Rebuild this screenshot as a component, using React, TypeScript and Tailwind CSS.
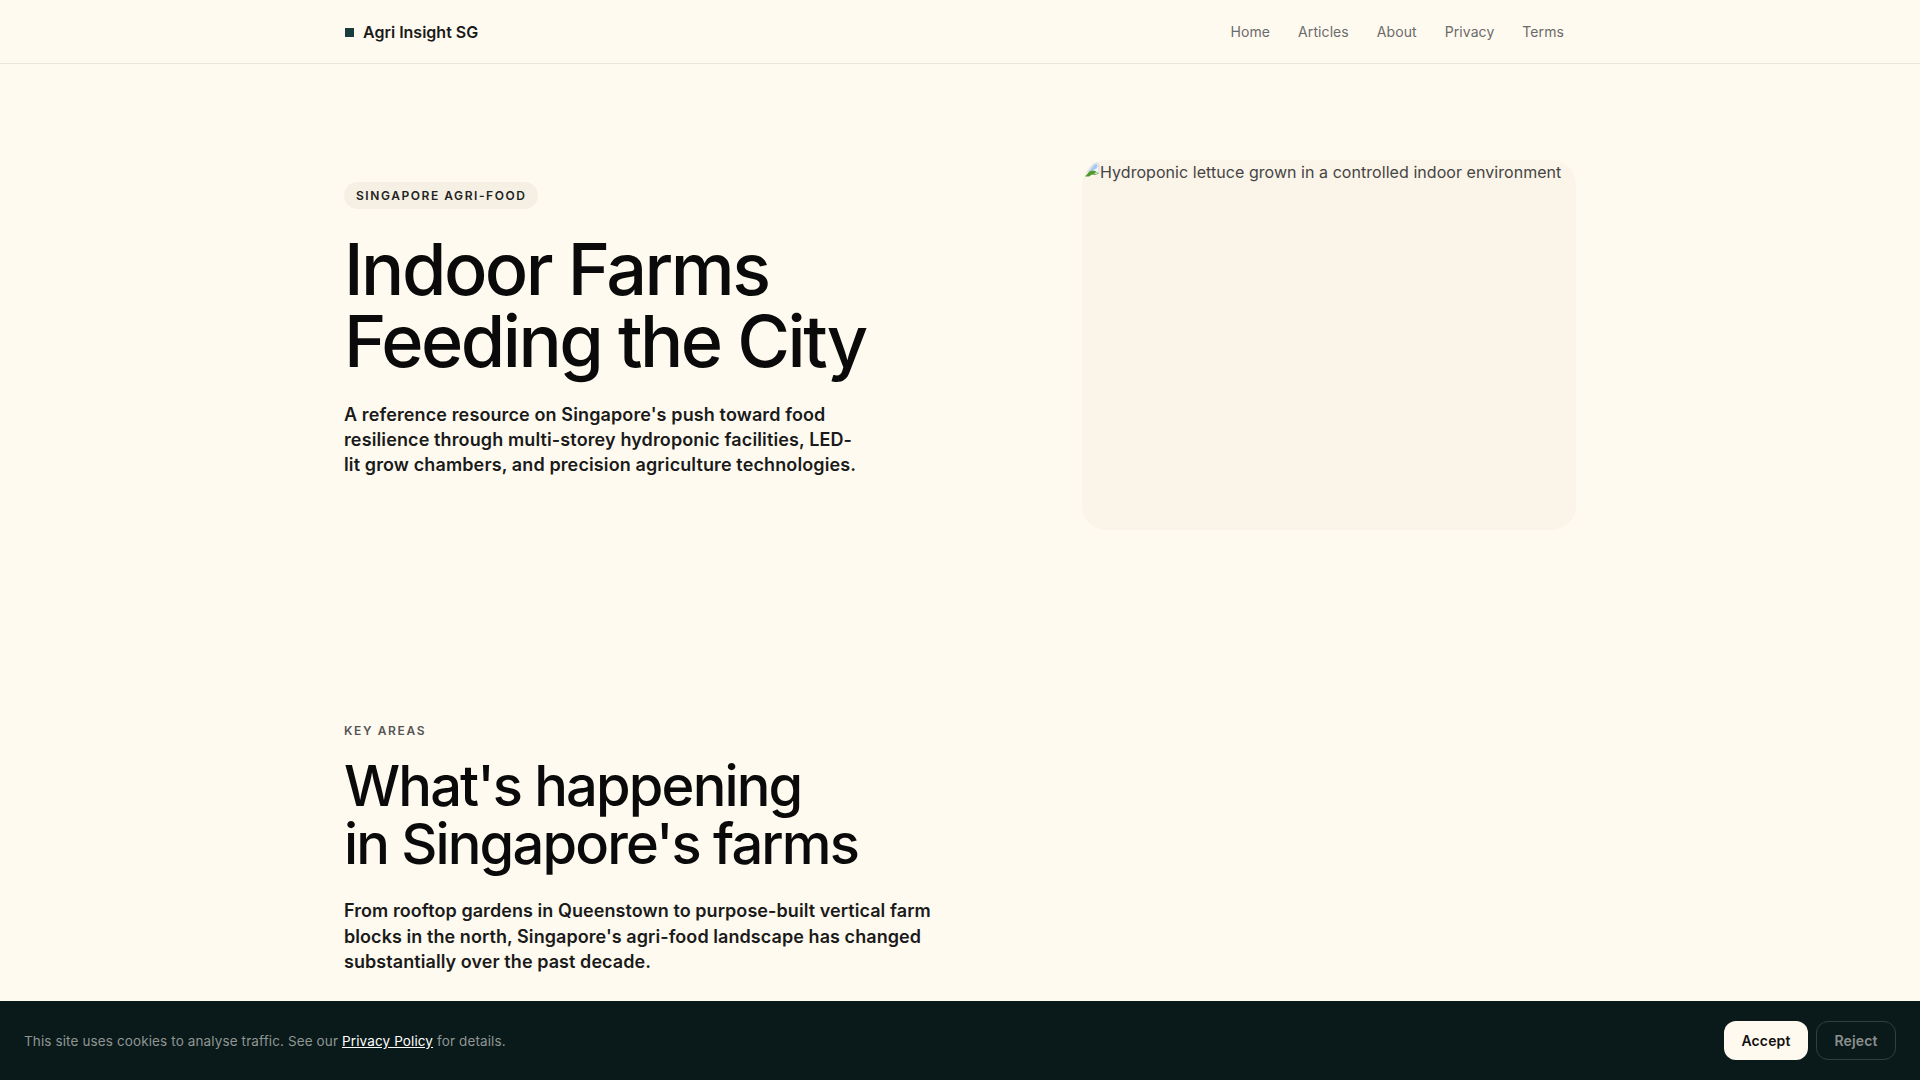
const navLinks = ["Home", "Articles", "About", "Privacy", "Terms"];

function BrokenImageIcon() {
  return (
    <svg width="16" height="16" viewBox="0 0 16 16" className="shrink-0">
      <path d="M3.5 10L10 1h3.5L15 3v8.500z" fill="#f4f6f9" stroke="#c4c8cf" strokeWidth="0.7" />
      <path d="M4.500 10L10.500 2.200h2.500l.8 1.800-1.300 2.500-3 1.500z" fill="#a9c8f0" />
      <path d="M1 14.500L5.500 9.500C8 8 10.500 8.500 12 9.500l2.500 1.500-2 2-4.500-.5-3 2z" fill="#4f9a2f" />
      <path d="M10 11l4-1-1.500 3z" fill="#d9e8cf" />
    </svg>
  );
}

export default function App() {
  return (
    <div className="h-screen overflow-hidden bg-[#fffaf0] text-[#1a1a1a] font-['Inter',sans-serif] tracking-[0.16px]">
      {/* Nav */}
      <header className="h-16 border-b border-[#e8e6df]">
        <div className="max-w-[1280px] mx-auto px-6 h-full flex items-center justify-between">
          <div className="flex items-center gap-[9px]">
            <span className="w-[9px] h-[9px] ml-px bg-[#1a3c3c] mt-[2px]" />
            <span className="text-base font-semibold tracking-normal">Agri Insight SG</span>
          </div>
          <nav className="flex items-center gap-7 pr-3 tracking-[0.08px]">
            {navLinks.map((link) => (
              <a key={link} className="text-sm text-[#6b6b6b]">
                {link}
              </a>
            ))}
          </nav>
        </div>
      </header>

      {/* Hero */}
      <section className="max-w-[1280px] mx-auto px-6 pt-24 pb-24 grid grid-cols-[1.3fr_1fr] gap-24 items-start">
        <div className="pt-[22px]">
          <span className="inline-block px-3 py-1.5 rounded-full bg-[#f5f0e3] text-xs font-semibold tracking-[0.13em] leading-[15px] text-[#222222]">
            SINGAPORE AGRI-FOOD
          </span>
          <h1 className="mt-6 text-[72px] leading-[72px] font-medium tracking-[-0.035em] text-[#0a0a0a]">
            Indoor Farms
            <br />
            Feeding the City
          </h1>
          <p className="mt-[25px] max-w-[518px] text-lg leading-[25px] font-semibold tracking-[0.12px]">
            A reference resource on Singapore's push toward food resilience through multi-storey hydroponic facilities, LED-lit grow chambers, and precision agriculture technologies.
          </p>
        </div>
        <div className="h-[370px] rounded-3xl bg-[#fbf4e9] overflow-hidden">
          <div className="flex items-start pl-[2px] pt-[2px] text-base leading-[21px] tracking-[0.05px] text-[#444444] whitespace-nowrap">
            <BrokenImageIcon />
            <span>Hydroponic lettuce grown in a controlled indoor environment</span>
          </div>
        </div>
      </section>

      {/* Key areas */}
      <section className="max-w-[1280px] mx-auto px-6 pt-[97px]">
        <div className="text-xs font-semibold tracking-[0.135em] text-[#555555]">KEY AREAS</div>
        <h2 className="mt-[18px] text-[56px] leading-[58px] font-medium tracking-[-0.033em] text-[#0a0a0a]">
          What's happening
          <br />
          in Singapore's farms
        </h2>
        <p className="mt-[25px] max-w-[600px] text-lg leading-[25.5px] font-semibold tracking-[0.067px]">
          From rooftop gardens in Queenstown to purpose-built vertical farm blocks in the north, Singapore's agri-food landscape has changed substantially over the past decade.
        </p>
      </section>

      {/* Cookie bar */}
      <div className="fixed inset-x-0 bottom-0 h-[79px] bg-[#0a1a1a] px-6 flex items-center justify-between">
        <p className="mt-px text-[13.5px] tracking-[0.12px] text-[#8f9593]">
          This site uses cookies to analyse traffic. See our{" "}
          <a className="text-white underline">Privacy Policy</a> for details.
        </p>
        <div className="flex items-center gap-2">
          <button className="h-[39px] w-[84px] rounded-xl bg-[#fffaf0] text-sm font-semibold text-[#111111]">Accept</button>
          <button className="h-[39px] w-[80px] rounded-xl border border-[#333f3f] text-sm font-semibold text-[#8a8f8d]">Reject</button>
        </div>
      </div>
    </div>
  );
}
